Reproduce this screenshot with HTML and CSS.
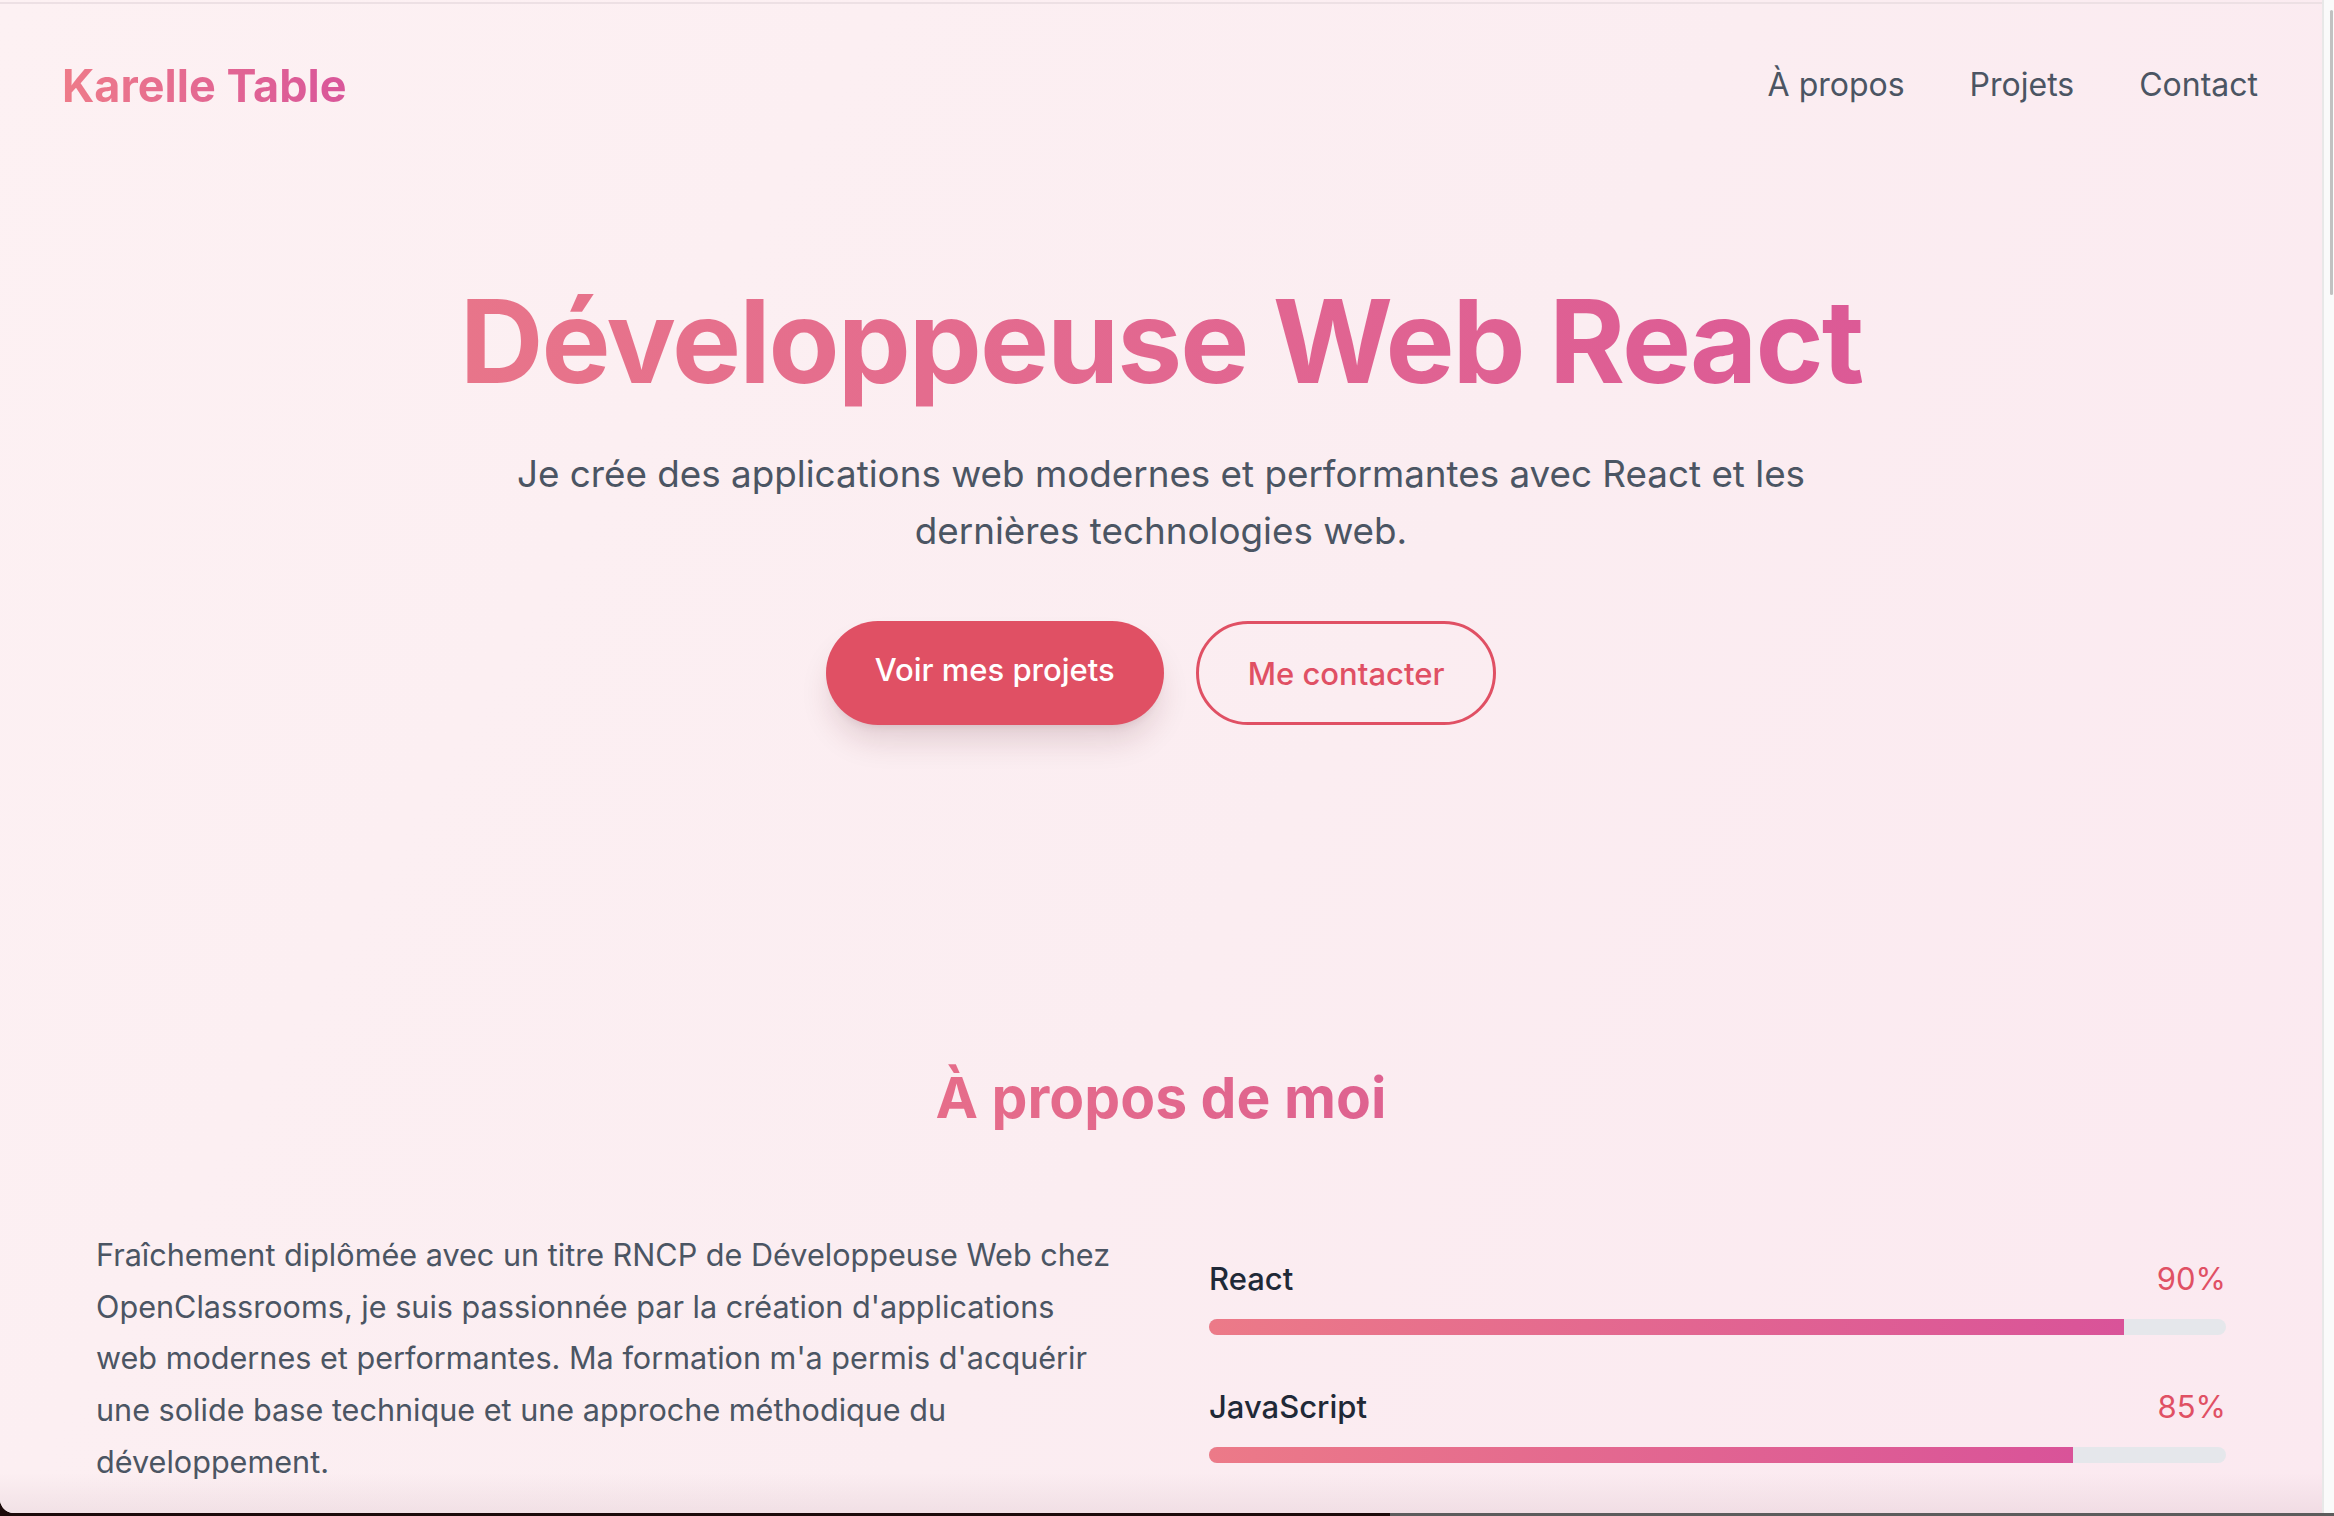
FILE: index.html
```html
<!DOCTYPE html>
<html lang="fr">
<head>
<meta charset="utf-8">
<title>Karelle Table</title>
<link rel="stylesheet" href="styles.css">
</head>
<body>
<div class="window">
  <div class="page">
    <div class="topline"></div>
    <header class="header">
      <a class="logo" href="#">Karelle Table</a>
      <nav class="nav">
        <a href="#about">À propos</a>
        <a href="#projects">Projets</a>
        <a href="#contact">Contact</a>
      </nav>
    </header>
    <section class="hero">
      <h1 class="hero-title"><span>Développeuse Web React</span></h1>
      <p class="hero-text">Je crée des applications web modernes et performantes avec React et les dernières technologies web.</p>
      <div class="hero-actions">
        <a class="btn btn-primary" href="#projects">Voir mes projets</a>
        <a class="btn btn-outline" href="#contact">Me contacter</a>
      </div>
    </section>
    <section class="about" id="about">
      <h2 class="about-title"><span>À propos de moi</span></h2>
      <div class="about-grid">
        <p class="about-text">Fraîchement diplômée avec un titre RNCP de Développeuse Web chez OpenClassrooms, je suis passionnée par la création d'applications web modernes et performantes. Ma formation m'a permis d'acquérir une solide base technique et une approche méthodique du développement.</p>
        <div class="skills">
          <div class="skill">
            <div class="skill-head"><span class="skill-name">React</span><span class="skill-pct">90%</span></div>
            <div class="skill-track"><div class="skill-fill" style="width: 90%"></div></div>
          </div>
          <div class="skill">
            <div class="skill-head"><span class="skill-name">JavaScript</span><span class="skill-pct">85%</span></div>
            <div class="skill-track"><div class="skill-fill" style="width: 85%"></div></div>
          </div>
        </div>
      </div>
    </section>
    <div class="page-fade"></div>
  </div>
  <div class="scrollbar"><div class="thumb"></div></div>
</div>
<div class="dock"><div class="dock-dark"></div><div class="dock-gray"></div></div>
</body>
</html>
```

FILE: styles.css
```css
* { box-sizing: border-box; }
html, body { margin: 0; padding: 0; }
body {
  width: 2334px;
  height: 1516px;
  overflow: hidden;
  background: #1c0a0a;
  font-family: "Inter", "Liberation Sans", sans-serif;
}
.window {
  display: flex;
  height: 1513px;
  border-bottom-left-radius: 14px;
  overflow: hidden;
  background: #fafafa;
}
.page {
  position: relative;
  flex: 1;
  background: linear-gradient(120deg, #fdf1f3 0%, #fbedf1 55%, #fbe9f0 100%);
  overflow: hidden;
}
.topline {
  height: 2px;
  margin-top: 2px;
  background: #ede0e4;
}
.header {
  height: 162px;
  padding: 0 64px 0 62px;
  display: flex;
  align-items: center;
  justify-content: space-between;
}
.logo {
  font-size: 45px;
  line-height: 1;
  font-weight: 700;
  text-decoration: none;
  background: linear-gradient(90deg, #ee7b89, #d9569a);
  -webkit-background-clip: text;
  background-clip: text;
  color: transparent;
}
.nav { display: flex; gap: 65px; }
.nav a {
  font-size: 32px;
  line-height: 1;
  color: #4b5563;
  text-decoration: none;
}
.hero { text-align: center; padding-top: 117px; }
.hero-title {
  margin: 0;
  font-size: 116px;
  line-height: 1;
  font-weight: 700;
  letter-spacing: -2px;
}
.hero-title span, .about-title span {
  background: linear-gradient(90deg, #e8758a, #dc5a96);
  -webkit-background-clip: text;
  background-clip: text;
  color: transparent;
}
.hero-text {
  max-width: 1382px;
  margin: 46px auto 0;
  font-size: 36.8px;
  line-height: 57px;
  color: #4b5563;
}
.hero-actions {
  margin-top: 62px;
  display: flex;
  justify-content: center;
  gap: 32px;
}
.btn {
  display: flex;
  align-items: center;
  height: 104px;
  padding: 0 49px;
  border-radius: 999px;
  font-size: 31px;
  font-weight: 500;
  text-decoration: none;
}
.btn-primary {
  background: #e05064;
  color: #ffffff;
  padding-bottom: 7px;
  box-shadow: 0 20px 32px -6px rgba(80, 20, 30, 0.16), 0 6px 10px -6px rgba(80, 20, 30, 0.12);
}
.btn-outline {
  border: 3px solid #e05064;
  color: #e05064;
  padding: 0 49px;
}
.about { padding-top: 338px; }
.about-title {
  margin: 0;
  text-align: center;
  font-size: 57px;
  line-height: 70px;
  font-weight: 700;
}
.about-title span { background-image: linear-gradient(90deg, #e66d8a, #de6290); }
.about-grid {
  max-width: 2130px;
  margin: 96px auto 0;
  display: grid;
  grid-template-columns: 1fr 1fr;
  gap: 96px;
}
.about-text {
  margin: 0;
  font-size: 30.6px;
  line-height: 51.7px;
  color: #4b5563;
}
.skills { padding-top: 25.5px; display: flex; flex-direction: column; gap: 48px; }
.skill-head {
  display: flex;
  justify-content: space-between;
  font-size: 31px;
  line-height: 48px;
  margin-bottom: 16px;
}
.skill-name { font-weight: 500; color: #1f2937; }
.skill-pct { color: #e05064; }
.skill-track {
  height: 16px;
  border-radius: 999px;
  background: #e5e7eb;
  overflow: hidden;
}
.skill-fill {
  height: 100%;
  background: linear-gradient(90deg, #ec7a88, #d95399);
}
.page-fade {
  position: absolute;
  left: 0;
  right: 0;
  bottom: 0;
  height: 40px;
  background: linear-gradient(180deg, rgba(200, 170, 180, 0), rgba(200, 170, 180, 0.2));
  pointer-events: none;
}
.scrollbar {
  width: 12px;
  border-left: 2px solid #e8e8e8;
  background: #fafafa;
  padding: 10px 1px 0 6px;
}
.thumb {
  height: 285px;
  border-radius: 3px;
  background: #c1c1c1;
}
.dock { display: flex; height: 3px; }
.dock-dark { width: 1390px; background: #1c0a0a; }
.dock-gray { flex: 1; background: #5c5c5c; }
```
